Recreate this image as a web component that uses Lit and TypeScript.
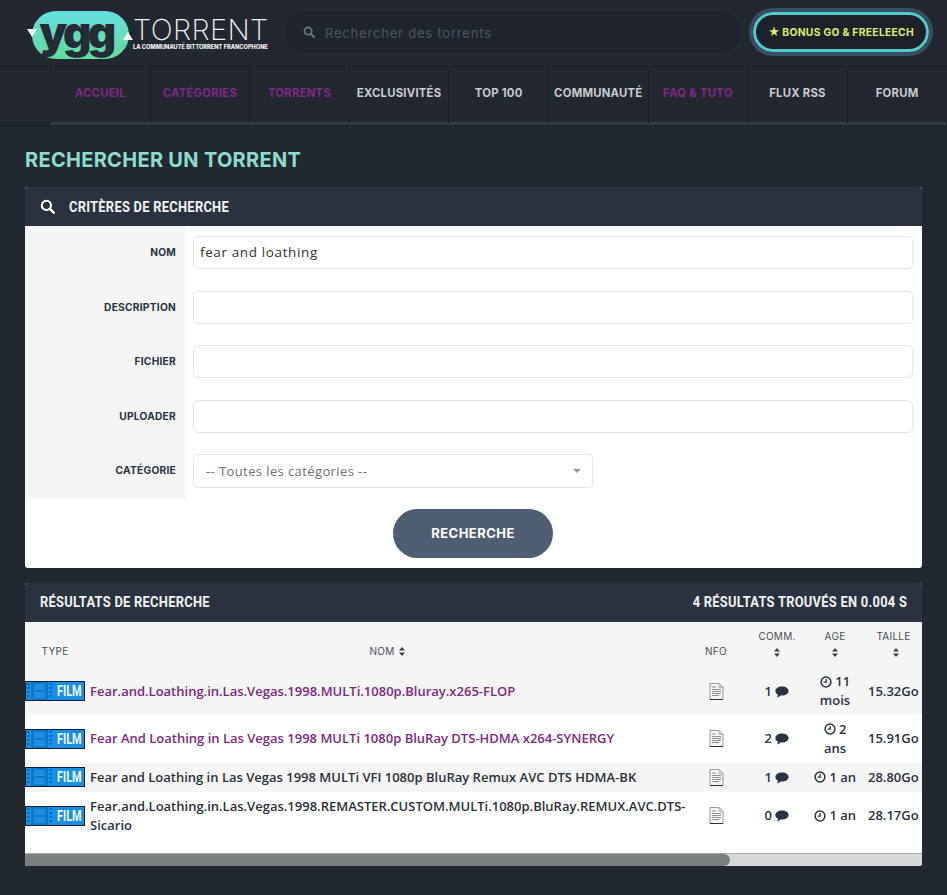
import { LitElement, html, css } from "lit";
import { customElement } from "lit/decorators.js";

const sans = css`"Open Sans", "Liberation Sans", sans-serif`;
const head = css`Inter, "Liberation Sans", sans-serif`;

const searchIcon = (size: number, color: string) => html`<svg width=${size} height=${size} viewBox="0 0 16 16" fill="none" stroke=${color} stroke-width="2.2" stroke-linecap="round"><circle cx="6.8" cy="6.8" r="4.9"/><path d="M10.5 10.5L14.6 14.6" stroke-width="2.6"/></svg>`;
const sortIcon = html`<svg class="sort" width="6" height="9" viewBox="0 0 6 9" fill="#3a3f47"><path d="M3 0L6 3.6H0zM3 9L0 5.4H6z"/></svg>`;
const bubble = html`<svg class="bubble" width="14" height="12" viewBox="0 0 14 12" fill="#2a3340"><path d="M7 .5c3.7 0 6.6 2 6.6 4.5S10.700 9.500 7 9.500c-.6 0-1.100 0-1.600-.1C4.500 10.400 3.300 11.200 1.800 11.500c.7-.8 1.100-1.600 1.200-2.800C1.400 7.900.4 6.600.4 5 .4 2.500 3.300.5 7 .5z"/></svg>`;
const clock = html`<svg class="clock" width="12" height="12" viewBox="0 0 12 12" fill="none" stroke="#2a3340" stroke-width="1.500"><circle cx="6" cy="6" r="4.900"/><path d="M6.200 3v3.200H3.600" stroke-width="1.300"/></svg>`;
const fileIcon = html`<svg class="file" width="15" height="17" viewBox="0 0 15 17"><path d="M1 .5h9l4 4v12H1z" fill="#f4f4f4" stroke="#8f8f8f" stroke-width=".9"/><path d="M10 .5v4h4z" fill="#d8d8d8" stroke="#9a9a9a" stroke-width=".6"/><path d="M3 4h4M3 6.500h9M3 8.500h9M3 10.500h9M3 12.500h7" stroke="#777" stroke-width=".8"/><path d="M1 16.500h13" stroke="#333" stroke-width="1"/></svg>`;
const filmBadge = html`<span class="film"><svg class="strip" width="36" height="18" viewBox="0 0 36 18" preserveAspectRatio="none"><path d="M5 0h17v18H5z" fill="#0f6fbf" opacity=".75"/><path d="M8 2h11v6H8zM8 10h11v6H8z" fill="#1c8fe4"/><path d="M1 2h2.500M1 6h2.500M1 10h2.500M1 14h2.500M23.500 2h2.500M23.500 6h2.500M23.500 10h2.500M23.500 14h2.500" stroke="#0f6ab5" stroke-width="1.800"/></svg><span class="film-txt">FILM</span></span>`;

const NAV: [string, boolean][] = [["Accueil", true], ["Catégories", true], ["Torrents", true], ["Exclusivités", false], ["Top 100", false], ["Communauté", false], ["FAQ & Tuto", true], ["Flux RSS", false], ["Forum", false]];
const FIELDS = ["Nom", "Description", "Fichier", "Uploader"];
const ROWS = [
  { name: "Fear.and.Loathing.in.Las.Vegas.1998.MULTi.1080p.Bluray.x265-FLOP", visited: true, comm: 1, age: "11 mois", size: "15.32Go" },
  { name: "Fear And Loathing in Las Vegas 1998 MULTi 1080p BluRay DTS-HDMA x264-SYNERGY", visited: true, comm: 2, age: "2 ans", size: "15.91Go" },
  { name: "Fear and Loathing in Las Vegas 1998 MULTi VFI 1080p BluRay Remux AVC DTS HDMA-BK", visited: false, comm: 1, age: "1 an", size: "28.80Go" },
  { name: "Fear.and.Loathing.in.Las.Vegas.1998.REMASTER.CUSTOM.MULTi.1080p.BluRay.REMUX.AVC.DTS-Sicario", visited: false, comm: 0, age: "1 an", size: "28.17Go" },
];

@customElement("app-root")
export class AppRoot extends LitElement {
  static styles = css`
    :host { display: block; min-height: 895px; background: #212830; font-family: ${sans}; color: #2a3340; }
    * { box-sizing: border-box; }
    .top { height: 67px; display: flex; align-items: center; padding: 0 0 2px 27px; background: #23272f; border-bottom: 1px solid #1b1f26; }
    .logo { display: flex; align-items: center; width: 245px; flex: none; margin-top: 6px; }
    .pill { position: relative; width: 97px; height: 48px; margin-left: 5px; border-radius: 24px; background: linear-gradient(#66dfdf, #5fdc9d); display: flex; align-items: center; justify-content: center; flex: none; }
    .ygg { font: 900 44px/48px ${head}; color: #262c36; letter-spacing: -3.5px; margin-top: -6px; margin-right: 9px; }
    .tri { position: absolute; width: 0; height: 0; border-left: 5.500px solid transparent; border-right: 5.500px solid transparent; }
    .tri.down { left: -5px; top: 18px; border-top: 8px solid #fff; }
    .tri.up { right: -4px; top: 21px; border-bottom: 8px solid #fff; }
    .brand { margin-left: 4px; display: flex; flex-direction: column; width: 137px; margin-top: -3px; }
    .brand b { font: 200 29px/26px ${head}; color: #f1f1f1; letter-spacing: .4px; }
    .brand small { font: 800 5.650px/7px ${head}; color: #f1f1f1; white-space: nowrap; margin-top: 1px; }
    .search { margin-left: 14px; width: 454px; height: 40px; flex: none; border-radius: 20px; background: #20242c; border: 1px solid #1c2027; display: flex; align-items: center; padding-left: 16px; gap: 10px; }
    .search span { font: 400 13px ${head}; color: #4d5461; letter-spacing: .8px; margin-top: 2px; }
    .bonus { margin-left: 13px; width: 176px; height: 40px; flex: none; border-radius: 20px; background: #1d2129; border: 3px solid #54c9c9; outline: 4px solid #34505e; outline-offset: 0; display: flex; align-items: center; justify-content: center; gap: 2px; font: 700 10.300px ${head}; letter-spacing: .3px; color: #d9ee70; white-space: nowrap; }
    .star { font-size: 11.500px; }
    nav { height: 59px; padding-left: 50px; display: flex; background: #23272f; border-bottom: 1px solid #1b1f26; }
    nav a { flex: 0 0 99.600px; height: 58px; border-left: 1px solid #1b1f26; border-bottom: 3px solid #343c4c; display: flex; align-items: center; justify-content: center; font: 700 11.300px ${head}; letter-spacing: .25px; text-transform: uppercase; color: #c9cbd0; padding-bottom: 3px; white-space: nowrap; }
    nav a.v { color: #7b2a82; }
    main { padding: 0 25px; }
    h1 { margin: 0; padding: 22px 0 15px; font: 700 20px/24px ${head}; letter-spacing: .3px; color: #8bdccd; text-transform: uppercase; }
    .panel { background: #fff; border-radius: 3px; overflow: hidden; margin-bottom: 15px; }
    .phead { height: 39px; background: #2a323f; display: flex; align-items: center; justify-content: space-between; padding: 0 15px; font: 700 14px Roboto, sans-serif; color: #f1f2f3; text-transform: uppercase; letter-spacing: .3px; }
    .phead div { display: flex; align-items: center; gap: 14px; }
    .nar { display: inline-block; white-space: nowrap; transform: scaleX(.92); transform-origin: left center; }
    .nar.r { transform-origin: right center; }
    .formgrid { display: grid; grid-template-columns: 160px 1fr; grid-auto-rows: 54.500px; }
    .lab { background: #f5f5f5; font: 700 10.200px ${head}; letter-spacing: .25px; color: #2a3340; text-transform: uppercase; padding: 0 9px 2px 0; display: flex; align-items: center; justify-content: flex-end; }
    .ctl { padding: 10px 9px 0 8px; display: flex; align-items: flex-start; }
    .inp { width: 100%; height: 33px; border: 1px solid #e6e6e6; border-radius: 5px; padding: 0 6px 1px; font: 400 13.500px ${sans}; color: #333; display: flex; align-items: center; letter-spacing: .62px; }
    .sel { width: 400px; height: 34px; border: 1px solid #e6e6e6; border-radius: 4px; padding: 0 12px 1px; font: 400 13px ${sans}; letter-spacing: .4px; color: #6b6f75; display: flex; align-items: center; justify-content: space-between; }
    .sel i { width: 0; height: 0; border-left: 4px solid transparent; border-right: 4px solid transparent; border-top: 4px solid #999; margin-right: -1px; }
    .btnrow { display: flex; justify-content: center; padding: 10px 0; }
    .btn { width: 160px; height: 49px; border-radius: 25px; background: #4f5d72; margin-left: -1px; display: flex; align-items: center; justify-content: center; font: 700 13px ${head}; letter-spacing: .45px; color: #fff; }
    .scroll { overflow: hidden; }
    .track { height: 13px; background: #d8d8d8; border-top: 1px solid #aaa; }
    .thumb { width: 705px; height: 12px; background: #7c7f80; border-radius: 0 6px 6px 0; }
    table { border-collapse: collapse; table-layout: fixed; width: 1141px; }
    th { height: 46px; font: 400 10px/12px ${head}; letter-spacing: .25px; color: #4a4f56; text-transform: uppercase; background: #f5f5f5; padding: 0 0 11px; vertical-align: bottom; text-align: center; }
    th .sort { display: block; margin: 6px auto 0; }
    th.inl { padding-right: 6px; }
    th.inl .sort { display: inline-block; margin: 0 0 0 5px; vertical-align: -1px; }
    th.cm { padding-left: 10px; }
    th.tl { text-indent: -5px; }
    td { font: 600 13px/19px ${sans}; color: #2a3340; padding: 4px; text-align: center; vertical-align: middle; }
    tr.odd td { background: #f5f5f5; }
    td.type { padding: 0; }
    td.nm { text-align: left; padding: 4px 5px; color: #2c3138; }
    td.nm.v { color: #7b2a82; }
    td.cm { padding: 4px 0 4px 10px; }
    td.ag { padding: 4px 4.500px; }
    td.sz { padding: 0 4px 0 6px; text-align: left; white-space: nowrap; }
    .file { display: block; margin: 0 auto; }
    .bubble { vertical-align: -2px; }
    .clock { vertical-align: -1.500px; }
    .film { display: block; width: 60px; height: 20px; border: 1px solid #0d1d33; background: #1a8fe8; position: relative; overflow: hidden; }
    .strip { position: absolute; left: 0; top: 0; }
    .film-txt { position: absolute; right: 2px; top: 0; font: 700 14px/18px Roboto, sans-serif; color: #eef7ff; transform: scaleX(.78); transform-origin: right; }
    .r1 { height: 47px; } .r2 { height: 48px; } .r3 { height: 29px; } .r4 { height: 48px; }
    .fill { height: 13px; }
  `;

  render() {
    return html`
      <header class="top">
        <div class="logo">
          <div class="pill"><span class="ygg">ygg</span><i class="tri down"></i><i class="tri up"></i></div>
          <div class="brand"><b>TORRENT</b><small>LA COMMUNAUTÉ BITTORRENT FRANCOPHONE</small></div>
        </div>
        <div class="search">${searchIcon(12, "#6f7683")}<span>Rechercher des torrents</span></div>
        <div class="bonus"><span class="star">★</span><span>BONUS GO &amp; FREELEECH</span></div>
      </header>
      <nav>${NAV.map(([t, v]) => html`<a class=${v ? "v" : ""}>${t}</a>`)}</nav>
      <main>
        <h1>Rechercher un torrent</h1>
        <section class="panel">
          <div class="phead"><div>${searchIcon(15, "#fff")}<span class="nar">Critères de recherche</span></div></div>
          <div class="formgrid">
            ${FIELDS.map((f, i) => html`<div class="lab">${f}</div><div class="ctl"><div class="inp">${i === 0 ? "fear and loathing" : ""}</div></div>`)}
            <div class="lab">Catégorie</div>
            <div class="ctl"><div class="sel"><span>-- Toutes les catégories --</span><i></i></div></div>
          </div>
          <div class="btnrow"><div class="btn">RECHERCHE</div></div>
        </section>
        <section class="panel">
          <div class="phead"><span class="nar">Résultats de recherche</span><span class="nar r">4 résultats trouvés en 0.004 s</span></div>
          <div class="scroll">
            <table>
              <colgroup><col style="width:60px"><col style="width:611px"><col style="width:40px"><col style="width:72px"><col style="width:54px"><col style="width:68px"><col style="width:236px"></colgroup>
              <thead><tr>
                <th>Type</th><th class="inl">Nom${sortIcon}</th><th>NFO</th>
                <th class="cm">Comm.${sortIcon}</th><th>Age${sortIcon}</th><th class="tl">Taille${sortIcon}</th><th></th>
              </tr></thead>
              <tbody>
                ${ROWS.map((r, i) => html`<tr class="r${i + 1} ${i % 2 === 0 ? "odd" : ""}">
                  <td class="type">${filmBadge}</td>
                  <td class="nm ${r.visited ? "v" : ""}">${r.name}</td>
                  <td>${fileIcon}</td>
                  <td class="cm">${r.comm} ${bubble}</td>
                  <td class="ag">${clock} ${r.age}</td>
                  <td class="sz">${r.size}</td>
                  <td></td>
                </tr>`)}
                <tr class="fill"><td colspan="7" style="padding:0"></td></tr>
              </tbody>
            </table>
          </div>
          <div class="track"><div class="thumb"></div></div>
        </section>
      </main>
    `;
  }
}
